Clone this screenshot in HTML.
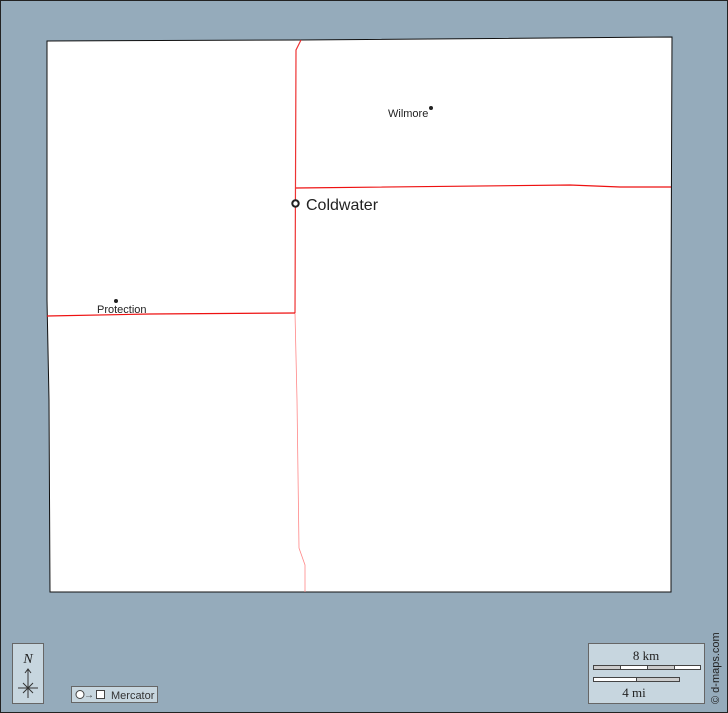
<!DOCTYPE html>
<html><head><style>
html,body{margin:0;padding:0;}
body{width:728px;height:713px;overflow:hidden;background:#95abbb;font-family:"Liberation Sans",sans-serif;}
</style></head><body>
<svg width="728" height="713" xmlns="http://www.w3.org/2000/svg" style="position:absolute;left:0;top:0">
<rect x="0.5" y="0.5" width="727" height="712" fill="#95abbb" stroke="#222" stroke-width="1"/>
<polygon points="47,41 300,40 672,37 671,300 671,592 50,592 49,400 47,300" fill="#fff" stroke="#111" stroke-width="1"/>
<polyline points="301,40 296,50 295,313" fill="none" stroke="#e33" stroke-width="1.2"/>
<polyline points="295,313 297,400 299,548 305,565 305,592" fill="none" stroke="#f88" stroke-width="0.8"/>
<polyline points="296,188 570,185 620,187 671,187" fill="none" stroke="#e11" stroke-width="1.2"/>
<polyline points="47,316 150,314 295,313" fill="none" stroke="#e11" stroke-width="1.2"/>
<circle cx="295.5" cy="203.5" r="3.2" fill="#fff" stroke="#222" stroke-width="2"/>
<text x="306" y="210" font-size="16" fill="#222">Coldwater</text>
<circle cx="431" cy="108" r="2" fill="#222"/>
<text x="388" y="117" font-size="11" fill="#222">Wilmore</text>
<circle cx="116" cy="301" r="2" fill="#222"/>
<text x="97" y="313" font-size="11" fill="#222">Protection</text>
<rect x="12.5" y="643.5" width="31" height="60" fill="#c7d6df" stroke="#666"/>
<text x="28" y="663" font-size="14" font-style="italic" font-family="Liberation Serif" text-anchor="middle" fill="#222">N</text>
<line x1="28" y1="669" x2="28" y2="698" stroke="#333"/>
<polyline points="25,673 28,669 31,673" fill="none" stroke="#333"/>
<line x1="18" y1="688" x2="38" y2="688" stroke="#333"/>
<line x1="23" y1="683" x2="33" y2="693" stroke="#333"/>
<line x1="33" y1="683" x2="23" y2="693" stroke="#333"/>
<rect x="71.5" y="686.5" width="86" height="16" fill="#c7d6df" stroke="#666"/>
<circle cx="80" cy="694.5" r="4" fill="#fff" stroke="#444"/>
<text x="84" y="698" font-size="10" fill="#444">→</text>
<rect x="96.5" y="690.5" width="8" height="8" fill="#fff" stroke="#444"/>
<text x="111" y="699" font-size="11" fill="#333">Mercator</text>
<rect x="588.5" y="643.5" width="116" height="60" fill="#c7d6df" stroke="#666"/>
<text x="646" y="660" font-size="13" font-family="Liberation Serif" text-anchor="middle" fill="#222">8 km</text>
<rect x="593.5" y="665.5" width="107" height="4" fill="#fff" stroke="#444"/>
<rect x="593.5" y="665.5" width="27" height="4" fill="#ccc" stroke="#444"/>
<rect x="647.5" y="665.5" width="27" height="4" fill="#ccc" stroke="#444"/>
<rect x="593.5" y="677.5" width="86" height="4" fill="#ccc" stroke="#444"/>
<rect x="593.5" y="677.5" width="43" height="4" fill="#fff" stroke="#444"/>
<text x="634" y="697" font-size="13" font-family="Liberation Serif" text-anchor="middle" fill="#222">4 mi</text>
<text transform="translate(719,704) rotate(-90)" font-size="11" fill="#222">© d-maps.com</text>
</svg>
</body></html>
